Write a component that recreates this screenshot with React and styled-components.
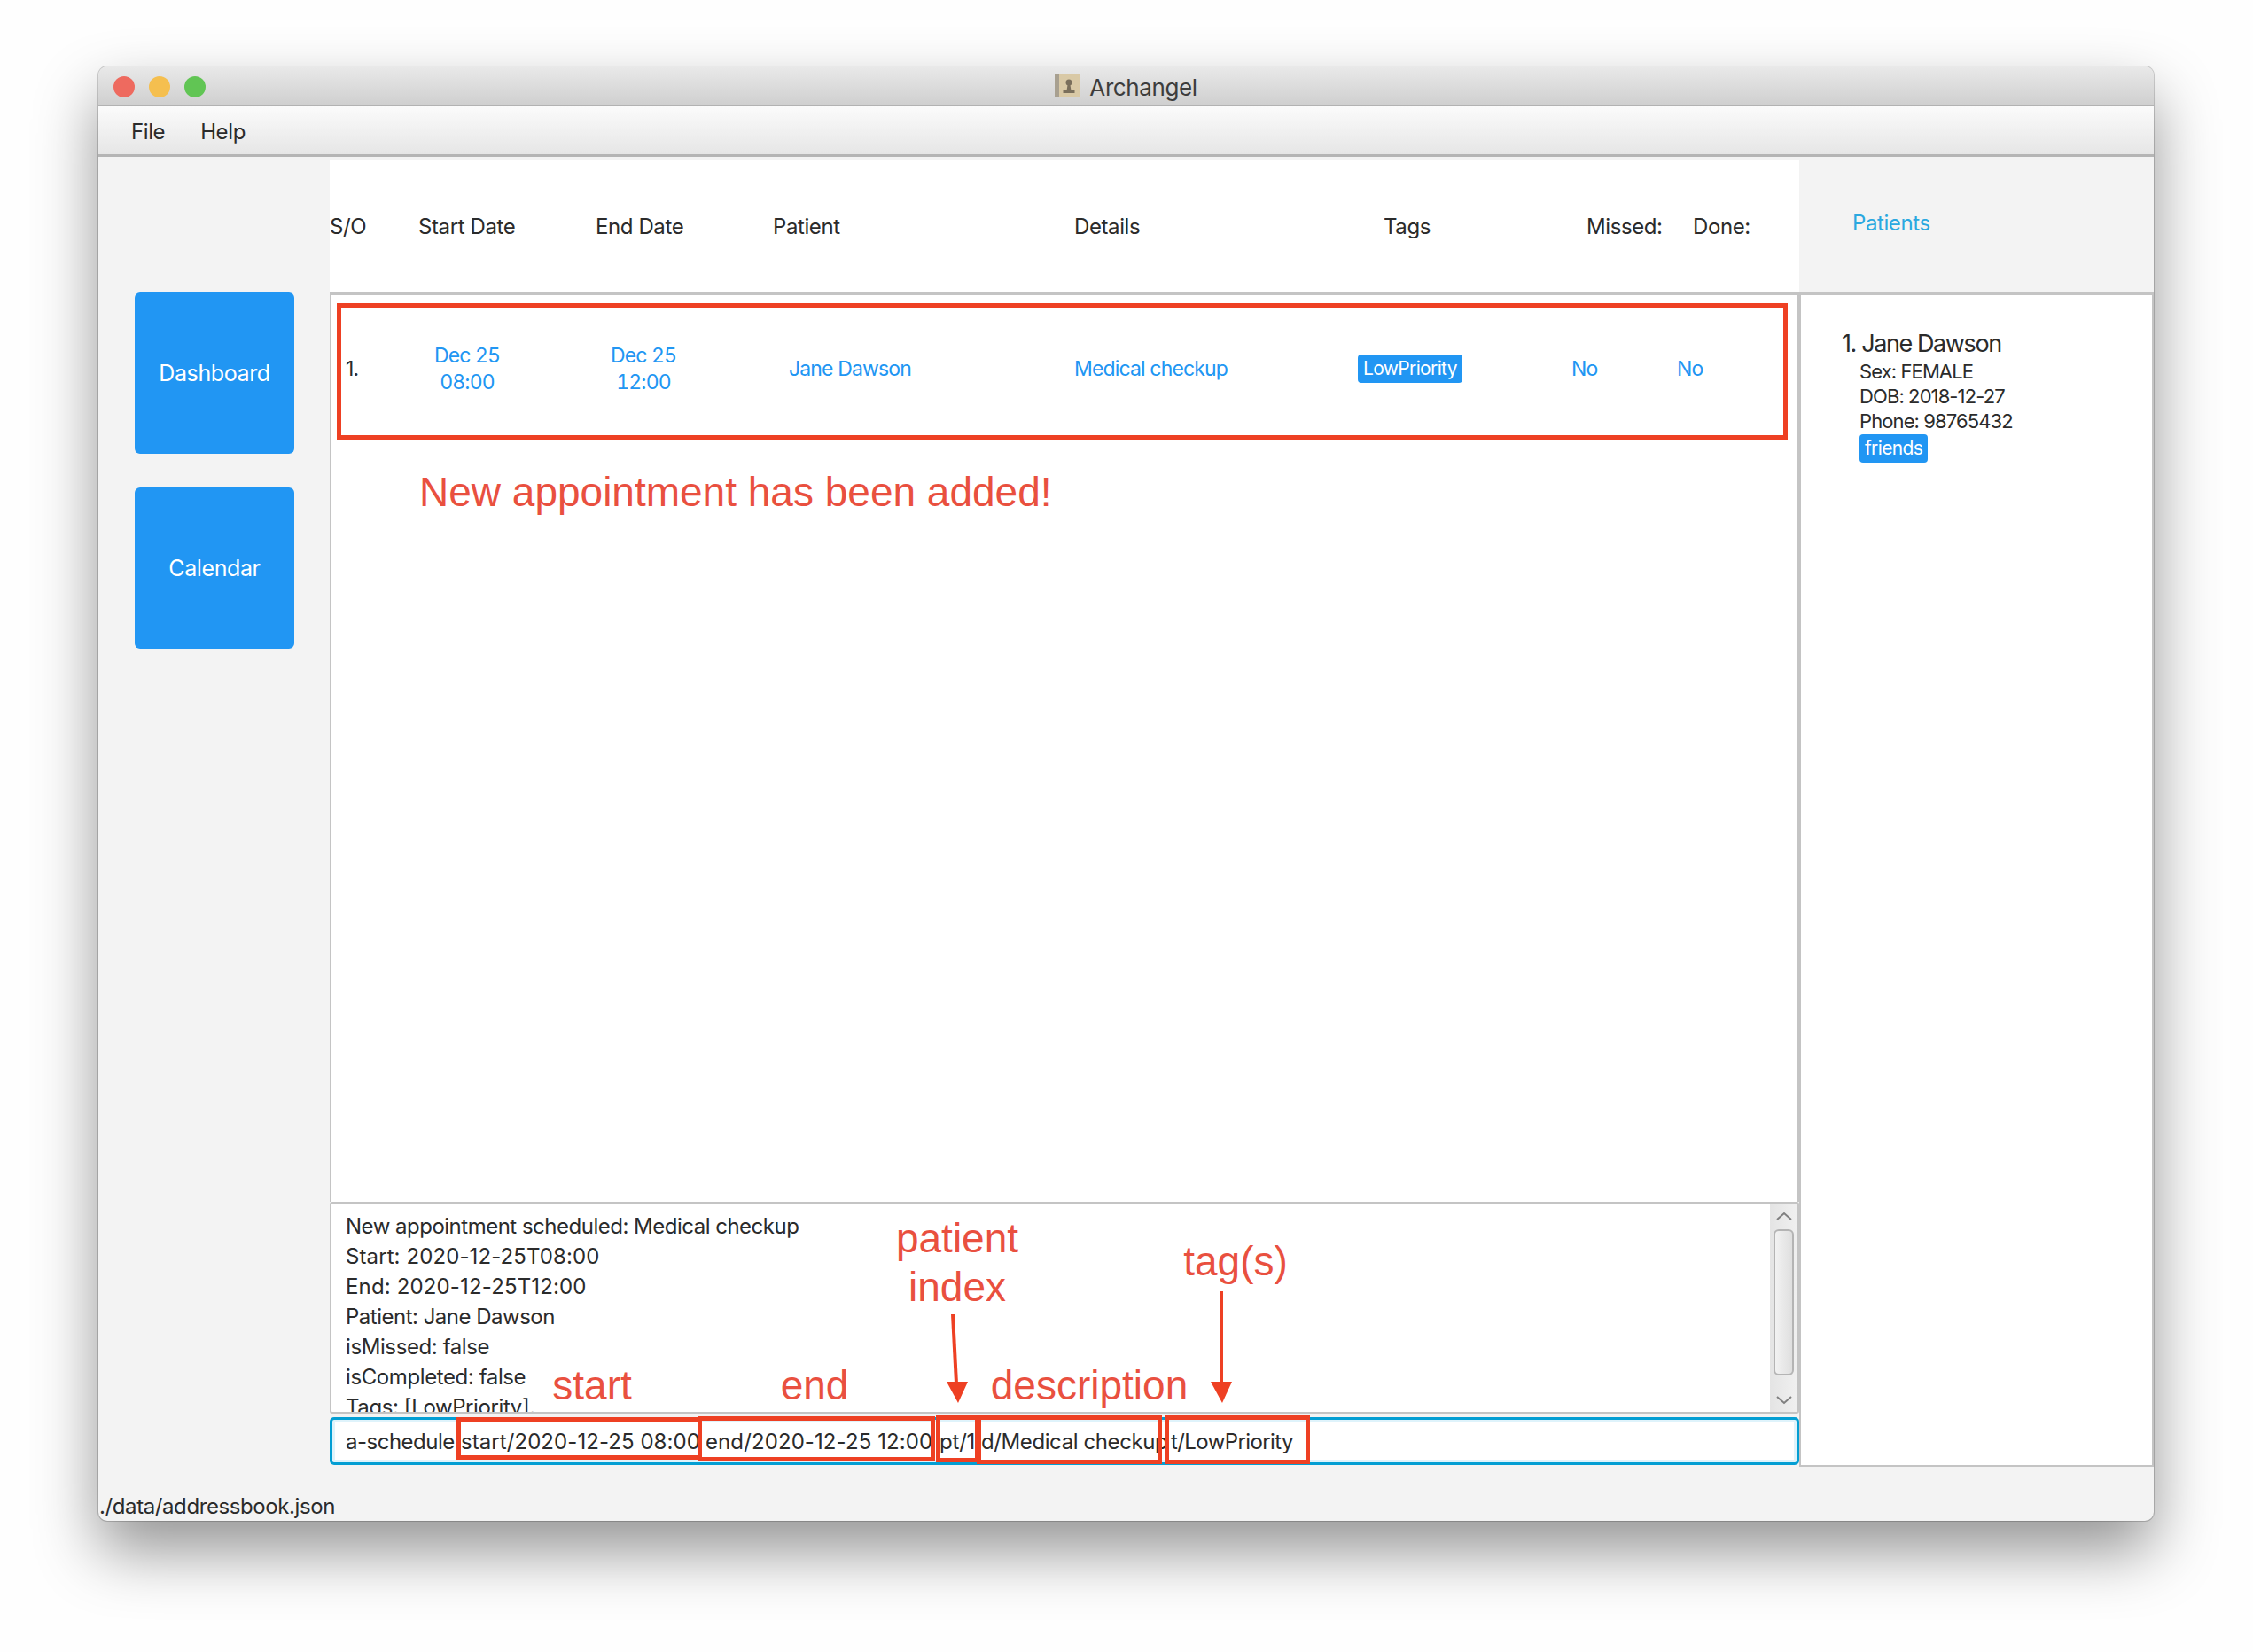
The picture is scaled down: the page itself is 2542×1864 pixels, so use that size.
import styled, { createGlobalStyle } from "styled-components"

const GlobalStyle = createGlobalStyle`
    html, body {
        margin: 0;
        background: #fefefe;
    }
    * {
        box-sizing: border-box;
    }
`

const Page = styled.div`
    width: 2542px;
    height: 1864px;
    padding: 75px 112px 148px 111px;
    font-family: Inter, "Liberation Sans", sans-serif;
    font-size: 24px;
    letter-spacing: -0.4px;
    color: #2b2b2b;
    overflow: hidden;
`

const Window = styled.div`
    position: relative;
    height: 100%;
    display: flex;
    flex-direction: column;
    background: #f3f3f3;
    border-radius: 10px;
    box-shadow: 0 0 0 1px rgba(0, 0, 0, 0.18), 0 34px 70px rgba(0, 0, 0, 0.42);
    overflow: hidden;
`

const TitleBar = styled.div`
    position: relative;
    height: 45px;
    flex-shrink: 0;
    display: flex;
    align-items: center;
    justify-content: center;
    gap: 11px;
    background: linear-gradient(#e9e9e9, #cfcfcf);
    border-bottom: 1px solid #b2b2b2;
    font-size: 26px;
    color: #3d3d3d;
`

const TitleText = styled.span`
    padding-top: 2px;
`

const Lights = styled.div`
    position: absolute;
    left: 17px;
    top: 11px;
    display: flex;
    gap: 16px;
`

const Light = styled.span`
    width: 24px;
    height: 24px;
    border-radius: 50%;
    background: ${p => p.$color};
`

const MenuBar = styled.div`
    height: 57px;
    flex-shrink: 0;
    display: flex;
    align-items: center;
    gap: 40px;
    padding: 2px 0 0 37px;
    background: linear-gradient(#fbfbfb, #e6e6e6);
    border-bottom: 3px solid #b5b5b5;
`

const Body = styled.div`
    flex: 1;
    display: flex;
    min-height: 0;
`

const Sidebar = styled.div`
    width: 261px;
    flex-shrink: 0;
    display: flex;
    flex-direction: column;
    gap: 38px;
    padding: 153px 0 0 41px;
`

const NavButton = styled.div`
    width: 180px;
    height: 182px;
    display: flex;
    align-items: center;
    justify-content: center;
    background: #2196f3;
    border-radius: 6px;
    color: #fff;
    font-size: 25px;
`

const Main = styled.div`
    width: 1658px;
    flex-shrink: 0;
    display: flex;
    flex-direction: column;
`

const Columns = styled.div`
    height: 153px;
    margin-top: 3px;
    flex-shrink: 0;
    display: grid;
    grid-template-columns: 100px 200px 200px 340px 349px 229px 120px 1fr;
    align-items: center;
    background: #fff;
    border-bottom: 3px solid #c4c4c4;
`

const List = styled.div`
    flex: 1;
    background: #fff;
    border-left: 2px solid #c4c4c4;
    border-right: 2px solid #c4c4c4;
    padding: 9px 0 0 6px;
`

const Row = styled.div`
    height: 148px;
    display: grid;
    grid-template-columns: 38px 198px 200px 386px 320px 241px 119px 1fr;
    align-items: center;
    padding-left: 10px;
    color: #2196f3;
    font-size: 23px;
    letter-spacing: -0.85px;
`

const Index = styled.span`
    color: #2b2b2b;
`

const DateCell = styled.div`
    text-align: center;
    line-height: 30px;
    font-variant-numeric: tabular-nums;
`

const PatientCell = styled.span`
    padding-left: 64px;
`

const Tag = styled.span`
    display: inline-block;
    background: #2196f3;
    border-radius: 4px;
    color: #fff;
    font-size: 21px;
    letter-spacing: -0.65px;
    line-height: 32px;
    padding: 0 6px;
`

const Results = styled.div`
    height: 239px;
    flex-shrink: 0;
    display: flex;
    background: #fff;
    border: 2px solid #c4c4c4;
    border-top-width: 3px;
    border-radius: 3px;
`

const ResultText = styled.div`
    flex: 1;
    padding: 8px 0 0 16px;
    line-height: 34px;
    overflow: hidden;
`

const ResultLine = styled.div`
    white-space: nowrap;
    letter-spacing: ${p => p.$spacing}px;
`

const Scrollbar = styled.div`
    width: 31px;
    display: flex;
    flex-direction: column;
    align-items: center;
    padding: 8px 0;
    background: linear-gradient(90deg, #e4e4e4, #f0f0f0);
    color: #808080;
`

const Thumb = styled.div`
    width: 23px;
    height: 165px;
    margin: 10px 0 auto;
    background: linear-gradient(90deg, #f2f2f2, #dfdfdf);
    border: 2px solid #b4b4b4;
    border-radius: 6px;
`

const CommandBox = styled.div`
    height: 54px;
    margin: 4px 0 2px;
    padding: 0 15px;
    flex-shrink: 0;
    display: flex;
    align-items: center;
    border: 3px solid #039ed3;
    border-radius: 5px;
    background: #fff;
    box-shadow: inset 0 0 0 3px #dff3fb;
    white-space: nowrap;
`

const CommandPart = styled.span`
    width: ${p => p.$w}px;
    flex-shrink: 0;
    letter-spacing: ${p => p.$spacing}px;
`

const Patients = styled.div`
    width: 400px;
    flex-shrink: 0;
    display: flex;
    flex-direction: column;
`

const PatientsHead = styled.div`
    height: 156px;
    flex-shrink: 0;
    padding: 60px 0 0 60px;
    color: #2aa8e0;
    border-bottom: 3px solid #c4c4c4;
`

const PatientList = styled.div`
    flex: 1;
    padding: 39px 0 0 46px;
    background: #fff;
    border: 2px solid #c4c4c4;
    border-top: none;
`

const PatientName = styled.div`
    font-size: 27px;
    letter-spacing: -1.4px;
    line-height: 32px;
`

const PatientInfo = styled.div`
    padding-left: 20px;
    font-size: 22px;
    letter-spacing: -0.9px;
    line-height: 28px;
    margin-top: 1px;

    ${Tag} {
        margin-top: 1px;
    }
`

const StatusBar = styled.div`
    height: 61px;
    flex-shrink: 0;
    padding: 30px 0 0 1px;
    line-height: 30px;
`

// annotations drawn on top of the screenshot
const Note = styled.div`
    position: absolute;
    left: ${p => p.$x}px;
    top: ${p => p.$y}px;
    transform: translate(${p => (p.$left ? "0" : "-50%")}, -50%);
    font-family: "Liberation Sans", sans-serif;
    font-size: 46px;
    letter-spacing: 0;
    color: #e9503f;
    white-space: nowrap;
`

const RedBox = styled.div`
    position: absolute;
    left: ${p => p.$x}px;
    top: ${p => p.$y}px;
    width: ${p => p.$w}px;
    height: ${p => p.$h}px;
    border: 5px solid #ee4023;
`

const Arrows = styled.svg`
    position: absolute;
    left: 0;
    top: 0;
    pointer-events: none;
`

const ox = 111
const oy = 75

const results = [
    { text: "New appointment scheduled: Medical checkup", spacing: -0.5 },
    { text: "Start: 2020-12-25T08:00", spacing: 0.1 },
    { text: "End: 2020-12-25T12:00", spacing: 0.15 },
    { text: "Patient: Jane Dawson", spacing: -0.5 },
    { text: "isMissed: false", spacing: -0.4 },
    { text: "isCompleted: false", spacing: -0.4 },
    { text: "Tags: [LowPriority].", spacing: -0.4 },
]

const commandParts = [
    { text: "a-schedule ", w: 130, spacing: -0.5 },
    { text: "start/2020-12-25 08:00 ", w: 276, spacing: 0.07 },
    { text: "end/2020-12-25 12:00 ", w: 264, spacing: 0.1 },
    { text: "pt/1 ", w: 47, spacing: -0.2 },
    { text: "d/Medical checkup ", w: 214, spacing: -0.4 },
    { text: "t/LowPriority", w: 160, spacing: -0.6 },
]

const notes = [
    { text: "start", x: 668, y: 1563 },
    { text: "end", x: 919, y: 1563 },
    { text: "patient", x: 1080, y: 1397 },
    { text: "index", x: 1080, y: 1452 },
    { text: "description", x: 1229, y: 1563 },
    { text: "tag(s)", x: 1394, y: 1423 },
]

const boxes = [
    { x: 380, y: 342, w: 1637, h: 154 },
    { x: 515, y: 1599, w: 277, h: 48 },
    { x: 787, y: 1598, w: 268, h: 51 },
    { x: 1056, y: 1597, w: 49, h: 53 },
    { x: 1102, y: 1597, w: 209, h: 55 },
    { x: 1314, y: 1597, w: 164, h: 55 },
]

const TitleIcon = () => (
    <svg width="28" height="26" viewBox="0 0 28 26">
        <rect width="28" height="26" fill="#d9c9a6" />
        <rect width="5" height="26" fill="#a8a090" />
        <circle cx="16" cy="9" r="3.5" fill="#7a6f5c" />
        <path d="M14.5 12 h3 l1 6 h4 v3 h-13 v-3 h4 z" fill="#7a6f5c" />
    </svg>
)

const Chevron = ({ up }) => (
    <svg width="18" height="10" viewBox="0 0 18 10">
        <path d={up ? "M1 9 L9 2 L17 9" : "M1 1 L9 8 L17 1"} fill="none" stroke="currentColor" strokeWidth="2" />
    </svg>
)

export default function App() {
    return (
        <Page>
            <GlobalStyle />
            <Window>
                <TitleBar>
                    <Lights>
                        <Light $color="#ee6a5f" />
                        <Light $color="#f5bf4f" />
                        <Light $color="#61c554" />
                    </Lights>
                    <TitleIcon />
                    <TitleText>Archangel</TitleText>
                </TitleBar>
                <MenuBar>
                    <span>File</span>
                    <span>Help</span>
                </MenuBar>
                <Body>
                    <Sidebar>
                        <NavButton>Dashboard</NavButton>
                        <NavButton>Calendar</NavButton>
                    </Sidebar>
                    <Main>
                        <Columns>
                            <span>S/O</span>
                            <span>Start Date</span>
                            <span>End Date</span>
                            <span>Patient</span>
                            <span>Details</span>
                            <span>Tags</span>
                            <span>Missed:</span>
                            <span>Done:</span>
                        </Columns>
                        <List>
                            <Row>
                                <Index>1.</Index>
                                <DateCell>Dec 25<br />08:00</DateCell>
                                <DateCell>Dec 25<br />12:00</DateCell>
                                <PatientCell>Jane Dawson</PatientCell>
                                <span>Medical checkup</span>
                                <span><Tag>LowPriority</Tag></span>
                                <span>No</span>
                                <span>No</span>
                            </Row>
                        </List>
                        <Results>
                            <ResultText>
                                {results.map(line => (
                                    <ResultLine key={line.text} $spacing={line.spacing}>{line.text}</ResultLine>
                                ))}
                            </ResultText>
                            <Scrollbar>
                                <Chevron up />
                                <Thumb />
                                <Chevron />
                            </Scrollbar>
                        </Results>
                        <CommandBox>
                            {commandParts.map(part => (
                                <CommandPart key={part.text} $w={part.w} $spacing={part.spacing}>{part.text}</CommandPart>
                            ))}
                        </CommandBox>
                    </Main>
                    <Patients>
                        <PatientsHead>Patients</PatientsHead>
                        <PatientList>
                            <PatientName>1. Jane Dawson</PatientName>
                            <PatientInfo>
                                <div>Sex: FEMALE</div>
                                <div>DOB: 2018-12-27</div>
                                <div>Phone: 98765432</div>
                                <Tag>friends</Tag>
                            </PatientInfo>
                        </PatientList>
                    </Patients>
                </Body>
                <StatusBar>./data/addressbook.json</StatusBar>

                {boxes.map(b => (
                    <RedBox key={b.x} $x={b.x - ox} $y={b.y - oy} $w={b.w} $h={b.h} />
                ))}
                <Note $left $x={473 - ox} $y={555 - oy}>New appointment has been added!</Note>
                {notes.map(n => (
                    <Note key={n.text} $x={n.x - ox} $y={n.y - oy}>{n.text}</Note>
                ))}
                <Arrows width="2319" height="1641">
                    <path d="M964 1408 L968 1486" stroke="#ee4023" strokeWidth="4" />
                    <path d="M957 1484 L981 1484 L970 1508 Z" fill="#ee4023" />
                    <path d="M1267 1382 L1267 1486" stroke="#ee4023" strokeWidth="4" />
                    <path d="M1255 1484 L1279 1484 L1268 1508 Z" fill="#ee4023" />
                </Arrows>
            </Window>
        </Page>
    )
}
